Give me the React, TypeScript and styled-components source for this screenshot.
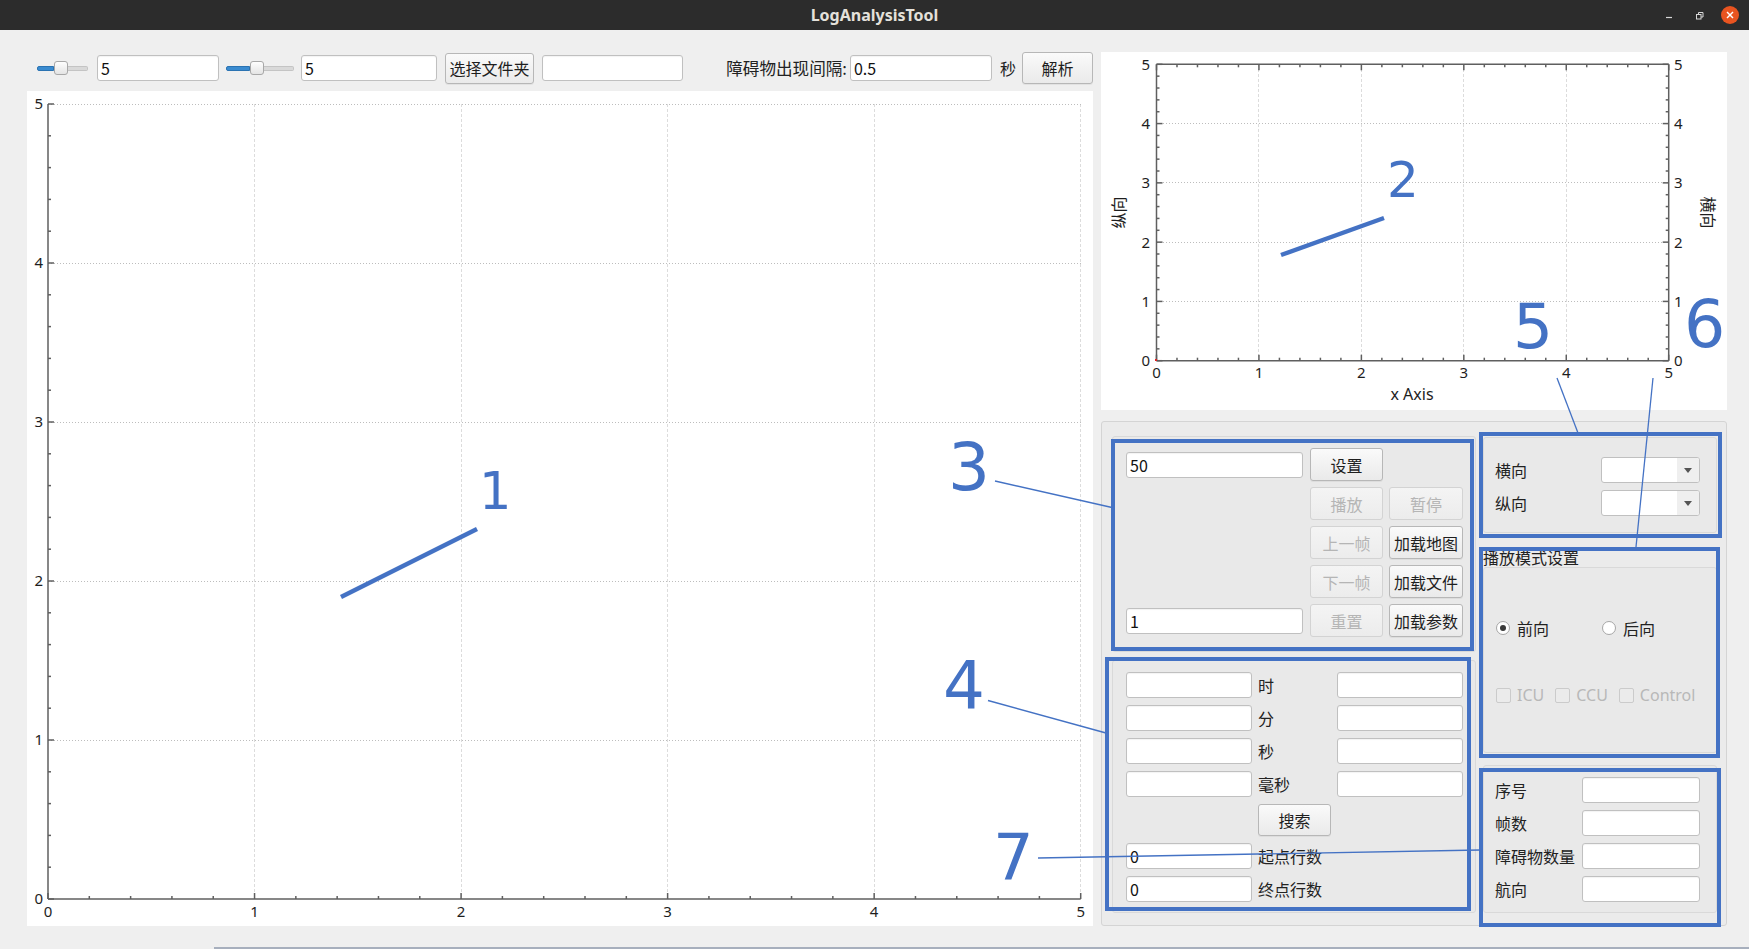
import React from "react";
import styled, { createGlobalStyle } from "styled-components";

const BLUE = "#4472c4";
const UI_FONT = `"Noto Sans CJK SC", "Noto Sans", sans-serif`;
const LATIN_FONT = `"Noto Sans", "Noto Sans CJK SC", sans-serif`;

const GlobalStyle = createGlobalStyle`
  html, body { margin: 0; padding: 0; background: #efefef; }
  body { font-family: ${UI_FONT}; font-size: 16px; color: #222222; }
  *, *::before, *::after { box-sizing: border-box; }
`;

const Window = styled.div`
  position: relative;
  width: 1749px;
  height: 949px;
  background: #efefef;
  overflow: hidden;
  display: flex;
  flex-direction: column;
`;

/* ---------- title bar ---------- */
const TitleBar = styled.div`
  height: 30px;
  flex: none;
  background: #2c2c2c;
  display: grid;
  grid-template-columns: 1fr auto 1fr;
  align-items: center;
`;
const TitleText = styled.div`
  grid-column: 2;
  color: #e4e1db;
  font-family: ${LATIN_FONT};
  font-weight: 700;
  font-size: 16px;
`;
const WinControls = styled.div`
  grid-column: 3;
  justify-self: end;
  display: flex;
  align-items: center;
  padding-right: 10px;
`;
const WinIcon = styled.span<{ $gap: number }>`
  display: flex;
  margin-right: ${(p) => p.$gap}px;
`;
const CloseBtn = styled.span`
  width: 18px;
  height: 18px;
  border-radius: 50%;
  background: #e95420;
  display: flex;
  align-items: center;
  justify-content: center;
`;

/* ---------- main layout ---------- */
const Main = styled.div`
  height: 896px;
  flex: none;
  display: flex;
  gap: 8px;
  padding: 22px 22px 0 27px;
`;
const LeftCol = styled.div`
  width: 1066px;
  display: flex;
  flex-direction: column;
`;
const RightCol = styled.div`
  width: 626px;
  display: flex;
  flex-direction: column;
  gap: 11px;
`;
const Toolbar = styled.div`
  height: 32px;
  margin-bottom: 7px;
  display: flex;
  align-items: center;
  padding-left: 10px;
`;
const ChartPanel = styled.div<{ $h: number }>`
  height: ${(p) => p.$h}px;
  background: #ffffff;
  flex: none;
`;
const Footer = styled.div`
  flex: 1;
  display: flex;
  align-items: flex-end;
`;
const FooterLine = styled.div`
  margin-left: 214px;
  flex: 1;
  height: 2px;
  background: #a7afbd;
`;

/* ---------- widgets ---------- */
const Slider = styled.div<{ $mr: number }>`
  display: flex;
  align-items: center;
  height: 14px;
  margin-right: ${(p) => p.$mr}px;
`;
const SliderFill = styled.div<{ $w: number }>`
  width: ${(p) => p.$w}px;
  height: 5px;
  background: #3a8bd0;
  border: 1px solid #2b73b2;
  border-radius: 2px 0 0 2px;
`;
const SliderHandle = styled.div`
  width: 14px;
  height: 14px;
  border: 1px solid #a8a8a8;
  border-radius: 3px;
  background: linear-gradient(#fefefe, #e4e4e4);
`;
const SliderRest = styled.div<{ $w: number }>`
  width: ${(p) => p.$w}px;
  height: 5px;
  background: #d9d9d9;
  border: 1px solid #c4c4c4;
  border-left: none;
  border-radius: 0 2px 2px 0;
`;

const TextField = styled.input.attrs({ readOnly: true, type: "text" })<{ $w?: number; $mr?: number }>`
  width: ${(p) => (p.$w ? `${p.$w}px` : "100%")};
  margin-right: ${(p) => p.$mr ?? 0}px;
  height: 26px;
  padding: 0 3px;
  font-family: ${UI_FONT};
  font-size: 16px;
  color: #111111;
  background: #ffffff;
  border: 1px solid #c0c0c0;
  border-radius: 3px;
  outline: none;
  box-shadow: inset 0 1px 1px rgba(0, 0, 0, 0.05);
`;

const PushButton = styled.button<{ $w?: number; $h?: number; $mr?: number }>`
  width: ${(p) => (p.$w ? `${p.$w}px` : "100%")};
  height: ${(p) => p.$h ?? 33}px;
  margin-right: ${(p) => p.$mr ?? 0}px;
  padding: 0;
  font-family: ${UI_FONT};
  font-size: 16px;
  color: #1e1e1e;
  background: linear-gradient(#fafafa, #eaeaea);
  border: 1px solid #b7b7b7;
  border-radius: 3px;
  box-shadow: 0 1px 0 rgba(0, 0, 0, 0.05);
  white-space: nowrap;
  &:disabled {
    color: #b5b5b5;
    background: linear-gradient(#f4f4f4, #ececec);
    border-color: #d3d3d3;
    box-shadow: none;
  }
`;

const ToolLabel = styled.span`
  margin-left: auto;
  margin-right: 3px;
  font-size: 16.6px;
  white-space: nowrap;
`;
const UnitLabel = styled.span`
  margin: 0 6px 0 8px;
`;

/* ---------- right control frame ---------- */
const ControlFrame = styled.div`
  height: 505px;
  flex: none;
  border: 1px solid #d4d4d4;
  border-radius: 3px;
  background: #ebebeb;
  display: flex;
  gap: 7px;
  padding: 14px 9px 12px 10px;
`;
const FrameColumn = styled.div<{ $w: number; $gap: number }>`
  width: ${(p) => p.$w}px;
  display: flex;
  flex-direction: column;
  gap: ${(p) => p.$gap}px;
`;
const GroupBox = styled.div<{ $h: number; $pad: string; $mt?: number }>`
  height: ${(p) => p.$h}px;
  margin-top: ${(p) => p.$mt ?? 0}px;
  flex: none;
  padding: ${(p) => p.$pad};
  border: 1px solid #d9d9d9;
  border-radius: 3px;
  background: #e9e9e9;
`;
const GroupTitle = styled.div`
  height: 19px;
  margin-top: 15px;
  line-height: 19px;
  font-size: 16px;
  white-space: nowrap;
`;

const ButtonGrid = styled.div`
  display: grid;
  grid-template-columns: 178px 73px 74px;
  grid-auto-rows: 33px;
  gap: 6px;
  align-items: center;
`;
const SearchGrid = styled.div`
  display: grid;
  grid-template-columns: 126px 73px 126px;
  grid-template-rows: 26px 26px 26px 26px 32px 26px 26px;
  column-gap: 6px;
  row-gap: 7px;
  align-items: center;
`;
const FieldLabel = styled.span<{ $span?: boolean }>`
  grid-column: ${(p) => (p.$span ? "2 / 4" : "auto")};
  white-space: nowrap;
  line-height: 26px;
`;
const Spacer = styled.span``;

const FormGrid = styled.div<{ $field: number }>`
  display: grid;
  grid-template-columns: 1fr ${(p) => p.$field}px;
  grid-auto-rows: 26px;
  row-gap: 7px;
  align-items: center;
`;
const Combo = styled.div`
  width: 99px;
  height: 26px;
  display: flex;
  background: #ffffff;
  border: 1px solid #c0c0c0;
  border-radius: 3px;
  overflow: hidden;
`;
const ComboArrow = styled.div`
  margin-left: auto;
  width: 22px;
  height: 100%;
  background: #efefef;
  display: flex;
  align-items: center;
  justify-content: center;
  &::after {
    content: "";
    border-left: 4px solid transparent;
    border-right: 4px solid transparent;
    border-top: 5px solid #555555;
  }
`;

const RadioRow = styled.div`
  display: grid;
  grid-template-columns: 106px auto;
  height: 20px;
  align-items: center;
`;
const RadioItem = styled.label`
  display: flex;
  align-items: center;
  gap: 7px;
`;
const RadioCircle = styled.span<{ $on?: boolean }>`
  width: 14px;
  height: 14px;
  border-radius: 50%;
  border: 1px solid #a6a6a6;
  background: #ffffff;
  display: flex;
  align-items: center;
  justify-content: center;
  &::after {
    content: "";
    width: 6px;
    height: 6px;
    border-radius: 50%;
    background: ${(p) => (p.$on ? "#3a3a3a" : "transparent")};
  }
`;
const CheckRow = styled.div`
  margin-top: 49px;
  height: 20px;
  display: flex;
  align-items: center;
  gap: 11px;
`;
const CheckItem = styled.label`
  display: flex;
  align-items: center;
  gap: 6px;
  color: #b8b8b8;
  font-family: ${LATIN_FONT};
  font-size: 16px;
`;
const CheckBox = styled.span`
  width: 15px;
  height: 15px;
  border: 1px solid #cbcbcb;
  border-radius: 2px;
  background: #ebebeb;
`;

/* ---------- annotation layer ---------- */
const AnnotationLayer = styled.div`
  position: absolute;
  inset: 0;
  pointer-events: none;
`;
const HighlightBox = styled.div<{ $x: number; $y: number; $w: number; $h: number }>`
  position: absolute;
  left: ${(p) => p.$x}px;
  top: ${(p) => p.$y}px;
  width: ${(p) => p.$w}px;
  height: ${(p) => p.$h}px;
  border: 4px solid ${BLUE};
`;
const Callout = styled.span<{ $x: number; $y: number; $s: number }>`
  position: absolute;
  left: ${(p) => p.$x}px;
  top: ${(p) => p.$y}px;
  font-family: "DejaVu Sans", sans-serif;
  font-size: ${(p) => p.$s}px;
  line-height: 1;
  color: ${BLUE};
`;
const LinesSvg = styled.svg`
  position: absolute;
  left: 0;
  top: 0;
`;

/* ---------- chart ---------- */
type PlotProps = {
  w: number;
  h: number;
  l: number;
  t: number;
  r: number;
  b: number;
  boxed: boolean;
  yLabelEnd: number;
  xLabelY: number;
  rightLabelStart?: number;
  children?: React.ReactNode;
};

const MAJORS = [0, 1, 2, 3, 4, 5];
const MINORS = Array.from({ length: 26 }, (_, i) => i).filter((i) => i % 5 !== 0).map((i) => i / 5);
const GRID = [1, 2, 3, 4, 5];

function Plot({ w, h, l, t, r, b, boxed, yLabelEnd, xLabelY, rightLabelStart, children }: PlotProps) {
  const X = (v: number) => l + ((r - l) * v) / 5;
  const Y = (v: number) => b - ((b - t) * v) / 5;
  const ticks: React.ReactNode[] = [];
  const add = (vals: number[], len: number, kind: string) =>
    vals.forEach((v) => {
      ticks.push(<line key={`${kind}l${v}`} x1={l} y1={Y(v)} x2={l + len} y2={Y(v)} />);
      ticks.push(<line key={`${kind}b${v}`} x1={X(v)} y1={b} x2={X(v)} y2={b - len} />);
      if (boxed) {
        ticks.push(<line key={`${kind}r${v}`} x1={r} y1={Y(v)} x2={r - len} y2={Y(v)} />);
        ticks.push(<line key={`${kind}t${v}`} x1={X(v)} y1={t} x2={X(v)} y2={t + len} />);
      }
    });
  add(MAJORS, 6, "M");
  add(MINORS, 3, "m");
  const labelStyle = { fontFamily: LATIN_FONT, fontSize: 15, fill: "#1e1e1e" } as const;
  return (
    <svg width={w} height={h} viewBox={`0 0 ${w} ${h}`}>
      <g stroke="#dcdcdc" strokeWidth={1} strokeDasharray="3 2" shapeRendering="crispEdges">
        {GRID.map((v) => (
          <line key={`gv${v}`} x1={X(v)} y1={t} x2={X(v)} y2={b} />
        ))}
      </g>
      <g stroke="#bdbdbd" strokeWidth={1} strokeDasharray="1 2" shapeRendering="crispEdges">
        {GRID.map((v) => (
          <line key={`gh${v}`} x1={l} y1={Y(v)} x2={r} y2={Y(v)} />
        ))}
      </g>
      <g stroke="#5f5f5f" strokeWidth={1.5}>
        <line x1={l} y1={t} x2={l} y2={b} />
        <line x1={l} y1={b} x2={r} y2={b} />
        {boxed && <line x1={r} y1={t} x2={r} y2={b} />}
        {boxed && <line x1={l} y1={t} x2={r} y2={t} />}
        {ticks}
      </g>
      {MAJORS.map((v) => (
        <text key={`yl${v}`} x={yLabelEnd} y={Y(v)} dy="0.36em" textAnchor="end" style={labelStyle}>
          {v}
        </text>
      ))}
      {rightLabelStart !== undefined &&
        MAJORS.map((v) => (
          <text key={`yr${v}`} x={rightLabelStart} y={Y(v)} dy="0.36em" style={labelStyle}>
            {v}
          </text>
        ))}
      {MAJORS.map((v) => (
        <text key={`xl${v}`} x={X(v)} y={xLabelY} dy="0.36em" textAnchor="middle" style={labelStyle}>
          {v}
        </text>
      ))}
      {children}
    </svg>
  );
}

/* ---------- data ---------- */
const boxes = [
  { x: 1111, y: 439, w: 363, h: 212 },
  { x: 1105, y: 657, w: 366, h: 254 },
  { x: 1479, y: 432, w: 243, h: 106 },
  { x: 1479, y: 547, w: 241, h: 211 },
  { x: 1479, y: 768, w: 242, h: 159 },
];
const callouts = [
  { n: "1", x: 479, y: 466, s: 51 },
  { n: "2", x: 1387, y: 155, s: 50 },
  { n: "3", x: 948, y: 435, s: 66 },
  { n: "4", x: 943, y: 653, s: 66 },
  { n: "5", x: 1513, y: 295, s: 63 },
  { n: "6", x: 1684, y: 292, s: 65 },
  { n: "7", x: 993, y: 826, s: 64 },
];
const thinLines = [
  [995, 481, 1112, 507.5],
  [988, 700.5, 1106, 733],
  [1557, 378, 1578, 433],
  [1653, 378, 1636, 547],
  [1038, 858, 1480, 850],
];
const thickLines = [
  [341, 597, 477, 529],
  [1281, 255, 1384, 218],
];

export default function App() {
  return (
    <>
      <GlobalStyle />
      <Window>
        <TitleBar>
          <TitleText>LogAnalysisTool</TitleText>
          <WinControls>
            <WinIcon $gap={22}>
              <svg width="8" height="8" viewBox="0 0 8 8">
                <line x1="1" y1="6.5" x2="7" y2="6.5" stroke="#d8d8d8" strokeWidth="1.2" />
              </svg>
            </WinIcon>
            <WinIcon $gap={17}>
              <svg width="9" height="9" viewBox="0 0 9 9" fill="none" stroke="#d8d8d8" strokeWidth="1">
                <rect x="1.5" y="3.5" width="4.5" height="4.5" />
                <path d="M3.5 3.5V1.5H8V6H6" />
              </svg>
            </WinIcon>
            <CloseBtn>
              <svg width="8" height="8" viewBox="0 0 8 8" stroke="#ffffff" strokeWidth="1.4">
                <line x1="1" y1="1" x2="7" y2="7" />
                <line x1="7" y1="1" x2="1" y2="7" />
              </svg>
            </CloseBtn>
          </WinControls>
        </TitleBar>

        <Main>
          <LeftCol>
            <Toolbar>
              <Slider $mr={9}>
                <SliderFill $w={17} />
                <SliderHandle />
                <SliderRest $w={20} />
              </Slider>
              <TextField $w={122} $mr={7} value="5" />
              <Slider $mr={7}>
                <SliderFill $w={24} />
                <SliderHandle />
                <SliderRest $w={30} />
              </Slider>
              <TextField $w={136} $mr={8} value="5" />
              <PushButton $w={89} $h={31} $mr={8}>
                选择文件夹
              </PushButton>
              <TextField $w={141} value="" />
              <ToolLabel>障碍物出现间隔:</ToolLabel>
              <TextField $w={142} value="0.5" />
              <UnitLabel>秒</UnitLabel>
              <PushButton $w={71} $h={32}>
                解析
              </PushButton>
            </Toolbar>
            <ChartPanel $h={835}>
              <Plot w={1066} h={835} l={21} t={13} r={1053.7} b={808} boxed={false} yLabelEnd={16} xLabelY={821} />
            </ChartPanel>
          </LeftCol>

          <RightCol>
            <ChartPanel $h={358}>
              <Plot
                w={626}
                h={358}
                l={55.5}
                t={12.3}
                r={567.7}
                b={308.7}
                boxed
                yLabelEnd={49}
                rightLabelStart={573}
                xLabelY={321}
              >
                <rect x={54} y={307} width={2} height={2} fill="#e02020" />
                <text
                  x={18.5}
                  y={160.5}
                  dy="0.36em"
                  textAnchor="middle"
                  transform="rotate(-90 18.5 160.5)"
                  style={{ fontFamily: UI_FONT, fontSize: 16, fill: "#1e1e1e" }}
                >
                  纵向
                </text>
                <text
                  x={607}
                  y={160.5}
                  dy="0.36em"
                  textAnchor="middle"
                  transform="rotate(90 607 160.5)"
                  style={{ fontFamily: UI_FONT, fontSize: 16, fill: "#1e1e1e" }}
                >
                  横向
                </text>
                <text
                  x={311}
                  y={342}
                  dy="0.36em"
                  textAnchor="middle"
                  style={{ fontFamily: LATIN_FONT, fontSize: 16, fill: "#1e1e1e" }}
                >
                  x Axis
                </text>
              </Plot>
            </ChartPanel>

            <ControlFrame>
              <FrameColumn $w={364} $gap={8}>
                <GroupBox $h={216} $pad="11px 12px 0 13px">
                  <ButtonGrid>
                    <TextField $w={177} value="50" />
                    <PushButton>设置</PushButton>
                    <Spacer />
                    <Spacer />
                    <PushButton disabled>播放</PushButton>
                    <PushButton disabled>暂停</PushButton>
                    <Spacer />
                    <PushButton disabled>上一帧</PushButton>
                    <PushButton>加载地图</PushButton>
                    <Spacer />
                    <PushButton disabled>下一帧</PushButton>
                    <PushButton>加载文件</PushButton>
                    <TextField $w={177} value="1" />
                    <PushButton disabled>重置</PushButton>
                    <PushButton>加载参数</PushButton>
                  </ButtonGrid>
                </GroupBox>
                <GroupBox $h={253} $pad="11px 12px 0 13px">
                  <SearchGrid>
                    <TextField value="" />
                    <FieldLabel>时</FieldLabel>
                    <TextField value="" />
                    <TextField value="" />
                    <FieldLabel>分</FieldLabel>
                    <TextField value="" />
                    <TextField value="" />
                    <FieldLabel>秒</FieldLabel>
                    <TextField value="" />
                    <TextField value="" />
                    <FieldLabel>毫秒</FieldLabel>
                    <TextField value="" />
                    <Spacer />
                    <PushButton $h={32}>搜索</PushButton>
                    <Spacer />
                    <TextField value="0" />
                    <FieldLabel $span>起点行数</FieldLabel>
                    <TextField value="0" />
                    <FieldLabel $span>终点行数</FieldLabel>
                  </SearchGrid>
                </GroupBox>
              </FrameColumn>

              <FrameColumn $w={234} $gap={0}>
                <GroupBox $h={96} $mt={1} $pad="19px 16px 0 11px">
                  <FormGrid $field={99}>
                    <FieldLabel>横向</FieldLabel>
                    <Combo>
                      <ComboArrow />
                    </Combo>
                    <FieldLabel>纵向</FieldLabel>
                    <Combo>
                      <ComboArrow />
                    </Combo>
                  </FormGrid>
                </GroupBox>
                <GroupTitle>播放模式设置</GroupTitle>
                <GroupBox $h={186} $pad="48px 8px 0 12px">
                  <RadioRow>
                    <RadioItem>
                      <RadioCircle $on />
                      前向
                    </RadioItem>
                    <RadioItem>
                      <RadioCircle />
                      后向
                    </RadioItem>
                  </RadioRow>
                  <CheckRow>
                    <CheckItem>
                      <CheckBox />
                      ICU
                    </CheckItem>
                    <CheckItem>
                      <CheckBox />
                      CCU
                    </CheckItem>
                    <CheckItem>
                      <CheckBox />
                      Control
                    </CheckItem>
                  </CheckRow>
                </GroupBox>
                <GroupBox $h={148} $mt={12} $pad="11px 16px 0 11px">
                  <FormGrid $field={118}>
                    <FieldLabel>序号</FieldLabel>
                    <TextField value="" />
                    <FieldLabel>帧数</FieldLabel>
                    <TextField value="" />
                    <FieldLabel>障碍物数量</FieldLabel>
                    <TextField value="" />
                    <FieldLabel>航向</FieldLabel>
                    <TextField value="" />
                  </FormGrid>
                </GroupBox>
              </FrameColumn>
            </ControlFrame>
          </RightCol>
        </Main>

        <Footer>
          <FooterLine />
        </Footer>

        <AnnotationLayer>
          {boxes.map((b, i) => (
            <HighlightBox key={i} $x={b.x} $y={b.y} $w={b.w} $h={b.h} />
          ))}
          <LinesSvg width={1749} height={949} viewBox="0 0 1749 949">
            <g stroke={BLUE} strokeWidth={1.3} fill="none">
              {thinLines.map(([x1, y1, x2, y2], i) => (
                <line key={i} x1={x1} y1={y1} x2={x2} y2={y2} />
              ))}
            </g>
            <g stroke={BLUE} strokeWidth={4.5} fill="none">
              {thickLines.map(([x1, y1, x2, y2], i) => (
                <line key={i} x1={x1} y1={y1} x2={x2} y2={y2} />
              ))}
            </g>
          </LinesSvg>
          {callouts.map((c) => (
            <Callout key={c.n} $x={c.x} $y={c.y} $s={c.s}>
              {c.n}
            </Callout>
          ))}
        </AnnotationLayer>
      </Window>
    </>
  );
}
